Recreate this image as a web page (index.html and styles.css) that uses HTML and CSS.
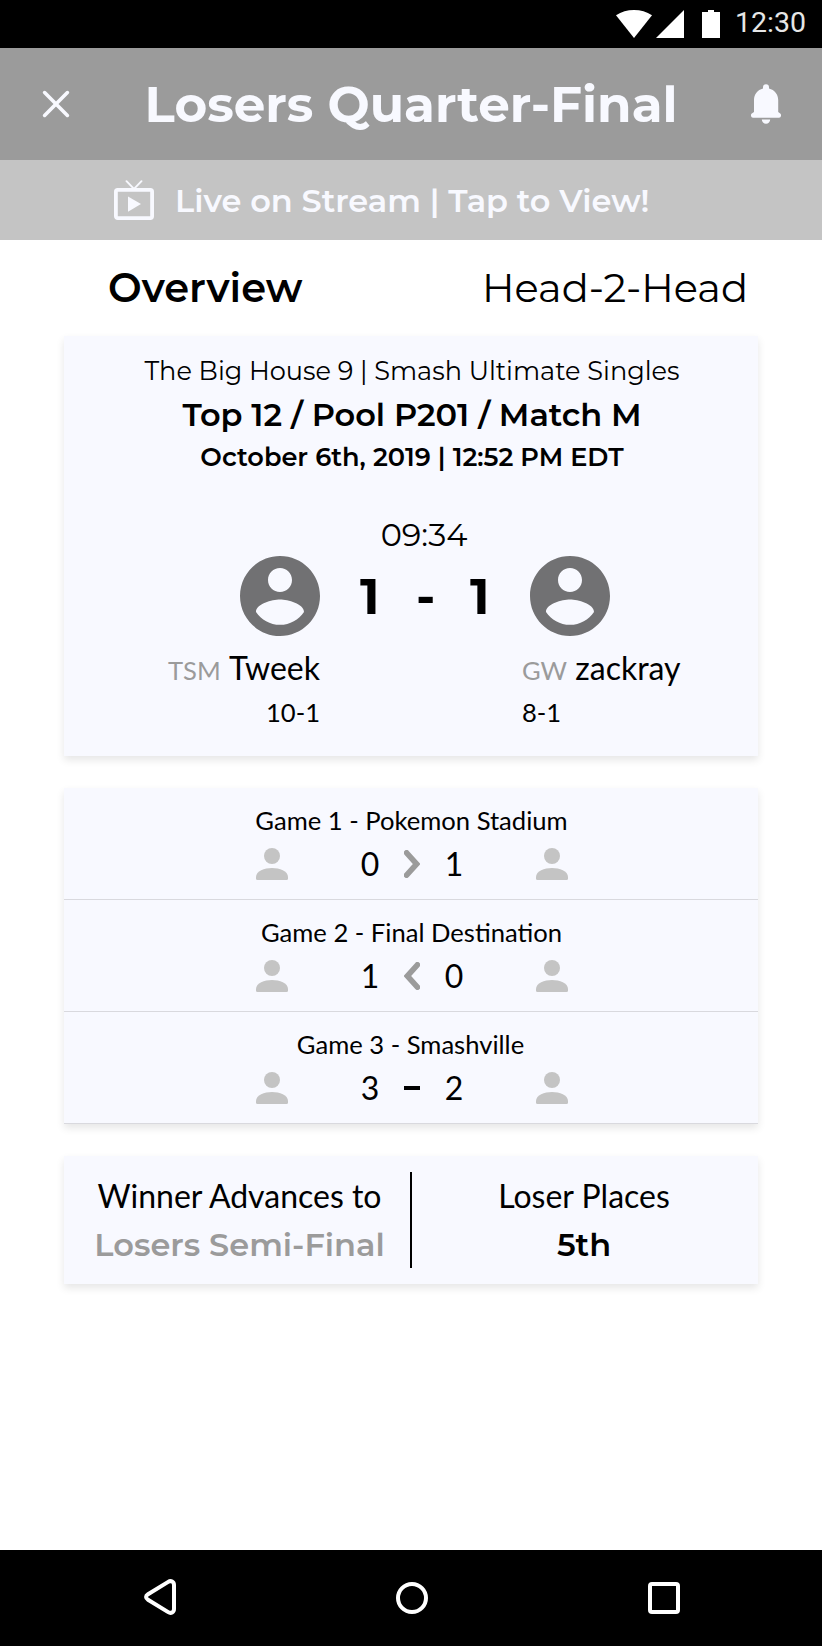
FILE: index.html
```html
<!DOCTYPE html>
<html lang="en">
<head>
<meta charset="utf-8">
<title>Losers Quarter-Final</title>
<link rel="stylesheet" href="styles.css">
</head>
<body>
<svg class="defs" aria-hidden="true">
  <symbol id="account" viewBox="2 2 20 20"><path d="M12 2C6.48 2 2 6.48 2 12s4.48 10 10 10 10-4.48 10-10S17.52 2 12 2zm0 3c1.66 0 3 1.34 3 3s-1.34 3-3 3-3-1.34-3-3 1.34-3 3-3zm0 14.2c-2.5 0-4.71-1.28-6-3.22.03-1.99 4-3.08 6-3.08 1.99 0 5.97 1.09 6 3.08-1.29 1.94-3.5 3.22-6 3.22z"/></symbol>
  <symbol id="person" viewBox="0 0 32 32"><circle cx="16" cy="8" r="8"/><path d="M0 29C0 23 8.500 20 16 20s16 3 16 9v1.500q0 1.500-1.500 1.500h-29Q0 32 0 30.500z"/></symbol>
</svg>
<div class="screen">
  <div class="status">
    <svg class="status-icons" width="104" height="28" viewBox="0 0 104 28" fill="#fff">
      <path d="M0 5.200Q8 0 18 0t18 5.200L18 28z"/><path d="M40 28 68 0v28z"/><path d="M86 2h6V0h6v2h6v26H86z"/>
    </svg>
    <span class="time">12:30</span>
  </div>
  <header class="header">
    <svg width="28" height="28" viewBox="0 0 28 28" fill="none" stroke="#f8f9ff" stroke-width="3.600" stroke-linecap="round"><path d="M2.600 2.600 25.400 25.400M25.400 2.600 2.600 25.400"/></svg>
    <h1 class="title">Losers Quarter-Final</h1>
    <svg width="30" height="40" viewBox="0 0 30 40" fill="#f8f9ff"><path d="M12 3.200a3 3 0 0 1 6 0V4.600C23.500 6 27.200 10.600 27.200 16V28L29.200 29.600Q30.300 30.500 30 32 29.700 33.700 28 33.700H2Q.3 33.700 0 32-.3 30.500.8 29.600L3 28V16C3 10.600 6.500 6 12 4.600z"/><path d="M10.800 35.500h8.400a4.200 4.200 0 0 1-8.400 0z"/></svg>
  </header>
  <div class="stream">
    <svg width="40" height="40" viewBox="0 0 40 40" fill="none" stroke="#f8f9ff"><path stroke-width="1.900" stroke-linecap="round" d="M12.500 1.200 20 9l7.500-7.800"/><rect x="1.900" y="9.900" width="36.200" height="28.200" rx="1.800" stroke-width="3.800"/><path stroke="none" fill="#f8f9ff" d="M14 16.500 27 24l-13 7.700z"/></svg>
    <span class="stream-text">Live on Stream | Tap to View!</span>
  </div>
  <nav class="tabs">
    <span class="tab tab-on">Overview</span>
    <span class="tab">Head-2-Head</span>
  </nav>
  <main class="cards">
    <section class="card match">
      <div class="event">The Big House 9 | Smash Ultimate Singles</div>
      <div class="pool">Top 12 / Pool P201 / Match M</div>
      <div class="date">October 6th, 2019 | 12:52 PM EDT</div>
      <div class="clock">09:34</div>
      <div class="players">
        <svg class="avatar"><use href="#account"/></svg>
        <div class="total"><span class="home">1</span><span class="separator">-</span><span>1</span></div>
        <svg class="avatar"><use href="#account"/></svg>
      </div>
      <div class="names">
        <div class="right"><small class="team-home">TSM</small> Tweek</div>
        <div><small>GW</small> zackray</div>
      </div>
      <div class="names records">
        <div class="right">10-1</div>
        <div>8-1</div>
      </div>
    </section>
    <section class="card games">
      <div class="game">
        <div class="stage">Game 1 - Pokemon Stadium</div>
        <div class="result">
          <svg class="person"><use href="#person"/></svg>
          <div class="points"><b>0</b>
            <svg class="mark" viewBox="0 0 16 28"><path d="M2.600 2.800 12.700 14 2.600 25.200"/></svg><b>1</b></div>
          <svg class="person"><use href="#person"/></svg>
        </div>
      </div>
      <div class="game">
        <div class="stage">Game 2 - Final Destination</div>
        <div class="result">
          <svg class="person"><use href="#person"/></svg>
          <div class="points"><b>1</b>
            <svg class="mark" viewBox="0 0 16 28"><path d="M13.400 2.800 3.300 14l10.100 11.200"/></svg><b>0</b></div>
          <svg class="person"><use href="#person"/></svg>
        </div>
      </div>
      <div class="game">
        <div class="stage stage-short">Game 3 - Smashville</div>
        <div class="result">
          <svg class="person"><use href="#person"/></svg>
          <div class="points"><b>3</b><i class="dash"></i><b>2</b></div>
          <svg class="person"><use href="#person"/></svg>
        </div>
      </div>
    </section>
    <section class="card outcome">
      <div class="side-win"><div>Winner Advances to</div><div class="dest muted">Losers Semi-Final</div></div>
      <div class="rule"></div>
      <div class="side-lose"><div>Loser Places</div><div class="dest">5th</div></div>
    </section>
  </main>
  <div class="navbar">
    <svg width="32" height="36" viewBox="0 0 32 36"><path d="M24.200 2.900C27 1.100 30 2.800 30 6v24c0 3.200-3 4.900-5.800 3.100L4 20.700C1.400 19.100 1.400 16.900 4 15.300z"/></svg>
    <svg width="32" height="32" viewBox="0 0 32 32"><circle cx="16" cy="16" r="14"/></svg>
    <svg width="32" height="32" viewBox="0 0 32 32"><rect x="2" y="2" width="28" height="28" rx="2"/></svg>
  </div>
</div>
</body>
</html>
```
FILE: styles.css
```css
* { box-sizing: border-box; }
body { margin: 0; background: #fff; color: #000; font-family: Montserrat, "Open Sans", sans-serif; }
svg { display: block; flex: none; }
.defs { display: none; }
.screen { width: 822px; height: 1646px; display: flex; flex-direction: column; white-space: nowrap; overflow: hidden; }

.status { height: 48px; background: #000; display: flex; align-items: center; justify-content: flex-end; padding-right: 15px; gap: 15px; }
.time { width: 72px; font: 400 28.500px/44px Roboto, sans-serif; color: #e6e6e6; padding-bottom: 2px; }

.header { height: 112px; background: #9b9b9b; display: flex; align-items: center; justify-content: space-between; padding: 0 41px 0 42px; }
.title { margin: 0; padding: 2px 0 0 1px; font-size: 50px; font-weight: 700; line-height: 60px; color: #f8f9ff; }

.stream { height: 80px; background: #c4c4c4; color: #f8f9ff; display: flex; align-items: center; gap: 21px; padding-left: 114px; font-size: 32px; font-weight: 600; line-height: 40px; }
.stream-text { padding-top: 2px; }

.tabs { height: 96px; display: flex; align-items: center; padding-left: 108px; font-size: 40px; line-height: 50px; }
.tab-on { width: 374px; font-weight: 600; }

.cards { flex: 1; display: flex; flex-direction: column; gap: 32px; padding: 0 64px; }
.card { background: #f8f9ff; box-shadow: 0 4px 8px rgba(0, 0, 0, .1); text-align: center; }

.match { height: 420px; padding-top: 15px; }
.event, .pool, .date { padding-left: 2px; }
.event { font-size: 25.600px; line-height: 40px; }
.pool { font-size: 32px; font-weight: 600; line-height: 47px; }
.date { font-size: 25.600px; font-weight: 600; line-height: 38px; }
.clock { margin-top: 39px; padding-left: 26px; font-size: 32px; line-height: 40px; }
.players { display: flex; justify-content: center; padding-left: 28px; margin-top: 1px; }
.avatar { width: 80px; height: 80px; fill: #717173; }
.total { width: 210px; height: 80px; padding: 1px 0 0 40px; display: flex; text-align: left; font-size: 50px; font-weight: 700; line-height: 80px; }
.home { width: 56px; }
.separator { width: 54px; }
.names { display: grid; grid-template-columns: 256px 236px; gap: 202px; margin-top: 12px; text-align: left; font: 32px/40px Lato, sans-serif; }
.names small { font-size: 25.600px; color: #9b9b9b; }
.names .team-home { margin-right: 1px; }
.records { margin-top: 2px; font-size: 25.600px; }
.right { text-align: right; }

.games { font-family: Lato, sans-serif; }
.game { height: 112px; padding-top: 12px; border-bottom: 1px solid #d9d9de; }
.stage { padding-left: 1px; font-size: 25.600px; line-height: 40px; }
.stage-short { padding: 0 1px 0 0; }
.result { display: flex; margin-top: 8px; padding-left: 192px; gap: 62px; }
.person { width: 32px; height: 32px; fill: #c4c4c4; }
.points { display: flex; align-items: center; gap: 14px; width: 124px; height: 32px; font-size: 32px; line-height: 32px; }
.points b { width: 40px; font-weight: 400; }
.mark { width: 16px; height: 28px; fill: none; stroke: #9b9b9b; stroke-width: 5.600; stroke-linecap: round; }
.dash { width: 16px; height: 4px; background: #000; }

.outcome { height: 128px; padding: 16px 0; display: flex; font: 32px/48px Lato, sans-serif; }
.side-win { width: 346px; padding-left: 5px; }
.side-lose { width: 346px; padding-right: 2px; }
.rule { width: 2px; background: #000; }
.dest { padding-top: 1px; line-height: 47px; font-family: Montserrat, "Open Sans", sans-serif; font-weight: 600; }
.muted { color: #9b9b9b; }

.navbar { height: 96px; background: #000; display: flex; align-items: center; justify-content: space-between; padding: 0 142px 0 144px; }
.navbar svg { fill: none; stroke: #fff; stroke-width: 4; }
.navbar svg:first-child { margin-bottom: 2px; }
```
